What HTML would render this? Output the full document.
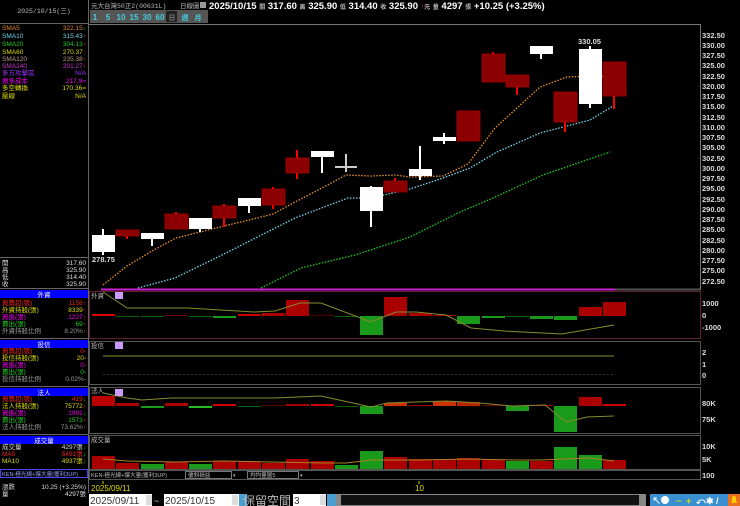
<!DOCTYPE html>
<html><head><meta charset="utf-8"><style>
html,body{margin:0;padding:0;background:#000;width:740px;height:506px;overflow:hidden}
svg{display:block}
text{font-family:"Liberation Sans","Noto Sans CJK TC",sans-serif}
.s{font-size:7px}
.m{font-family:"Liberation Mono","Noto Sans CJK TC",monospace;font-size:6.5px}
.ax{font-family:"Liberation Sans",sans-serif;font-size:7.5px;fill:#ddd;font-weight:bold}
</style></head><body>
<svg width="740" height="506" viewBox="0 0 740 506" xmlns="http://www.w3.org/2000/svg">
<rect width="740" height="506" fill="#000"/>
<!-- left panel -->
<line x1="88.5" y1="0" x2="88.5" y2="493" stroke="#666"/>
<text x="44" y="13" class="m" fill="#bbb" text-anchor="middle">2025/10/15(三)</text>
<line x1="0" y1="23.5" x2="88" y2="23.5" stroke="#666"/>
<g class="m">
<text x="2" y="30" fill="#e08030">SMA5</text><text x="86" y="30" fill="#e08030" text-anchor="end">322.15<tspan fill="#0c0">↓</tspan></text>
<text x="2" y="38" fill="#6cd0e0">SMA10</text><text x="86" y="38" fill="#6cd0e0" text-anchor="end">315.43<tspan fill="#f33">↑</tspan></text>
<text x="2" y="46" fill="#2c2">SMA20</text><text x="86" y="46" fill="#2c2" text-anchor="end">304.13<tspan fill="#f33">↑</tspan></text>
<text x="2" y="54" fill="#dd0">SMA60</text><text x="86" y="54" fill="#dd0" text-anchor="end">270.37<tspan fill="#f33">↑</tspan></text>
<text x="2" y="61" fill="#b98">SMA120</text><text x="86" y="61" fill="#b98" text-anchor="end">235.38<tspan fill="#f33">↑</tspan></text>
<text x="2" y="68" fill="#c3c">SMA240</text><text x="86" y="68" fill="#c3c" text-anchor="end">201.27<tspan fill="#f33">↑</tspan></text>
<text x="2" y="75" fill="#93f">多方攻擊區</text><text x="86" y="75" fill="#93f" text-anchor="end">N/A</text>
<text x="2" y="83" fill="#e0e">做多成本</text><text x="86" y="83" fill="#e0e" text-anchor="end">217.9=</text>
<text x="2" y="90" fill="#dd0">多空轉換</text><text x="86" y="90" fill="#dd0" text-anchor="end">170.36=</text>
<text x="2" y="98" fill="#dd0">壓線</text><text x="86" y="98" fill="#dd0" text-anchor="end">N/A</text>
</g>
<line x1="0" y1="257.5" x2="88" y2="257.5" stroke="#666"/>
<g class="m" fill="#ddd">
<text x="2" y="265">開</text><text x="86" y="265" text-anchor="end">317.60</text>
<text x="2" y="272">高</text><text x="86" y="272" text-anchor="end">325.90</text>
<text x="2" y="279">低</text><text x="86" y="279" text-anchor="end">314.40</text>
<text x="2" y="286">收</text><text x="86" y="286" text-anchor="end">325.90</text>
</g>
<line x1="0" y1="288.5" x2="88" y2="288.5" stroke="#666"/>
<rect x="0" y="290" width="88" height="8" fill="#0000ff"/>
<text x="44" y="297" class="m" fill="#fff" text-anchor="middle">外資</text>
<g class="m">
<text x="2" y="305" fill="#e22">買賣超(張)</text><text x="86" y="305" fill="#e22" text-anchor="end">1158<tspan fill="#f33">↑</tspan></text>
<text x="2" y="312" fill="#dd0">外資持股(張)</text><text x="86" y="312" fill="#dd0" text-anchor="end">8339<tspan fill="#f33">↑</tspan></text>
<text x="2" y="319" fill="#e0e">買進(張)</text><text x="86" y="319" fill="#e0e" text-anchor="end">1227<tspan fill="#f33">↑</tspan></text>
<text x="2" y="326" fill="#2c2">賣出(張)</text><text x="86" y="326" fill="#2c2" text-anchor="end">69<tspan fill="#f33">↑</tspan></text>
<text x="2" y="333" fill="#999">外資持股比例</text><text x="86" y="333" fill="#999" text-anchor="end">8.20%<tspan fill="#f33">↑</tspan></text>
</g>
<line x1="0" y1="338.5" x2="88" y2="338.5" stroke="#666"/>
<rect x="0" y="340" width="88" height="8" fill="#0000ff"/>
<text x="44" y="347" class="m" fill="#fff" text-anchor="middle">投信</text>
<g class="m">
<text x="2" y="353" fill="#e22">買賣超(張)</text><text x="86" y="353" fill="#e22" text-anchor="end">0-</text>
<text x="2" y="360" fill="#dd0">投信持股(張)</text><text x="86" y="360" fill="#dd0" text-anchor="end">20-</text>
<text x="2" y="367" fill="#e0e">買進(張)</text><text x="86" y="367" fill="#e0e" text-anchor="end">0-</text>
<text x="2" y="374" fill="#2c2">賣出(張)</text><text x="86" y="374" fill="#2c2" text-anchor="end">0-</text>
<text x="2" y="381" fill="#999">投信持股比例</text><text x="86" y="381" fill="#999" text-anchor="end">0.02%-</text>
</g>
<line x1="0" y1="386.5" x2="88" y2="386.5" stroke="#666"/>
<rect x="0" y="388" width="88" height="8" fill="#0000ff"/>
<text x="44" y="395" class="m" fill="#fff" text-anchor="middle">法人</text>
<g class="m">
<text x="2" y="401" fill="#e22">買賣超(張)</text><text x="86" y="401" fill="#e22" text-anchor="end">419<tspan fill="#0c0">↓</tspan></text>
<text x="2" y="408" fill="#dd0">法人持股(張)</text><text x="86" y="408" fill="#dd0" text-anchor="end">75772<tspan fill="#f33">↑</tspan></text>
<text x="2" y="415" fill="#e0e">買進(張)</text><text x="86" y="415" fill="#e0e" text-anchor="end">1991<tspan fill="#0c0">↓</tspan></text>
<text x="2" y="422" fill="#2c2">賣出(張)</text><text x="86" y="422" fill="#2c2" text-anchor="end">1573<tspan fill="#f33">↑</tspan></text>
<text x="2" y="429" fill="#999">法人持股比例</text><text x="86" y="429" fill="#999" text-anchor="end">73.62%<tspan fill="#f33">↑</tspan></text>
</g>
<line x1="0" y1="434.5" x2="88" y2="434.5" stroke="#666"/>
<rect x="0" y="436" width="88" height="8" fill="#0000ff"/>
<text x="44" y="443" class="m" fill="#fff" text-anchor="middle">成交量</text>
<g class="m">
<text x="2" y="449" fill="#ddd">成交量</text><text x="86" y="449" fill="#ddd" text-anchor="end">4297張<tspan fill="#0c0">↓</tspan></text>
<text x="2" y="456" fill="#e22">MA5</text><text x="86" y="456" fill="#e22" text-anchor="end">5491張<tspan fill="#0c0">↓</tspan></text>
<text x="2" y="463" fill="#dd0">MA10</text><text x="86" y="463" fill="#dd0" text-anchor="end">4937張<tspan fill="#0c0">↓</tspan></text>
</g>
<rect x="0.5" y="469.5" width="87" height="8" fill="#000" stroke="#44f"/>
<text x="2" y="476" font-size="5.6" fill="#99f" font-family="Liberation Mono,Noto Sans CJK TC,monospace">KEN-極光線+爆大量(獲利3UP)</text>
<g class="m" fill="#ddd">
<text x="2" y="489">漲跌</text><text x="86" y="489" text-anchor="end">10.25 (+3.25%)</text>
<text x="2" y="496">量</text><text x="86" y="496" text-anchor="end">4297張</text>
</g>

<!-- top header -->
<text x="91" y="8" class="m" fill="#bbb">元大台灣50正2(00631L)</text>
<text x="180" y="8" class="m" fill="#bbb">日線圖</text>
<rect x="200" y="2" width="6" height="6" fill="#999"/>
<text x="209" y="9" font-size="9.5" font-weight="bold" fill="#fff">2025/10/15 <tspan font-size="6" fill="#bbb">開</tspan> 317.60 <tspan font-size="6" fill="#bbb">高</tspan> 325.90 <tspan font-size="6" fill="#bbb">低</tspan> 314.40 <tspan font-size="6" fill="#bbb">收</tspan> 325.90 <tspan fill="#f22" font-size="7">↑</tspan><tspan font-size="6" fill="#bbb">元</tspan> <tspan font-size="6" fill="#bbb">量</tspan> 4297 <tspan font-size="6" fill="#bbb">張</tspan>  +10.25 (+3.25%)</text>
<g font-size="8" fill="#4cd" font-weight="bold">
<rect x="90" y="10" width="118" height="13" fill="#555"/>
<rect x="166" y="11" width="11" height="11" fill="#222"/>
<text x="95" y="20" text-anchor="middle">1</text>
<text x="108" y="20" text-anchor="middle">5</text>
<text x="121" y="20" text-anchor="middle">10</text>
<text x="134" y="20" text-anchor="middle">15</text>
<text x="147" y="20" text-anchor="middle">30</text>
<text x="160" y="20" text-anchor="middle">60</text>
<text x="172" y="20" text-anchor="middle" class="s" fill="#777">日</text>
<text x="185" y="20" text-anchor="middle" class="s">週</text>
<text x="198" y="20" text-anchor="middle" class="s">月</text>
</g>

<!-- main chart frame -->
<path d="M89 24.5 H700.5 V290" stroke="#777" fill="none"/>
<g class="ax">
<text x="702" y="38">332.50</text><text x="702" y="48">330.00</text><text x="702" y="58">327.50</text><text x="702" y="68">325.00</text><text x="702" y="79">322.50</text><text x="702" y="89">320.00</text><text x="702" y="99">317.50</text><text x="702" y="109">315.00</text><text x="702" y="120">312.50</text><text x="702" y="130">310.00</text><text x="702" y="140">307.50</text><text x="702" y="150">305.00</text><text x="702" y="161">302.50</text><text x="702" y="171">300.00</text><text x="702" y="181">297.50</text><text x="702" y="191">295.00</text><text x="702" y="202">292.50</text><text x="702" y="212">290.00</text><text x="702" y="222">287.50</text><text x="702" y="232">285.00</text><text x="702" y="243">282.50</text><text x="702" y="253">280.00</text><text x="702" y="263">277.50</text><text x="702" y="273">275.00</text><text x="702" y="284">272.50</text>
</g>
<!-- MAs -->
<polyline fill="none" stroke="#e8902a" stroke-width="1.3" stroke-dasharray="1.5,1.5" points="103,285 127,266 152,251 176,238 200,232 224,226 249,220 273,214 297,201 322,188 346,175 371,176 395,175 410,177 443,176 468,164 495,128 540,87 567,77 590,76 613,77"/>
<polyline fill="none" stroke="#7cd4ec" stroke-width="1.3" stroke-dasharray="1.5,1.5" points="138,288 175,278 228,252 295,218 348,198 371,198 410,189 443,178 470,168 497,152 540,133 590,120 613,106"/>
<polyline fill="none" stroke="#2c2" stroke-width="1.3" stroke-dasharray="1.5,1.5" points="261,288 301,268 355,255 410,237 460,212 493,198 543,175 610,152"/>
<!-- candles -->
<g stroke-width="2">
<g stroke="#fff"><line x1="103" y1="229" x2="103" y2="255"/><line x1="152" y1="233" x2="152" y2="246"/><line x1="200" y1="218" x2="200" y2="232"/><line x1="249" y1="198" x2="249" y2="213"/><line x1="322" y1="151" x2="322" y2="173"/><line x1="371" y1="186" x2="371" y2="227"/><line x1="420" y1="146" x2="420" y2="180"/><line x1="444" y1="133" x2="444" y2="144"/><line x1="541" y1="46" x2="541" y2="59"/><line x1="590" y1="46" x2="590" y2="108"/></g>
<g stroke="#f00"><line x1="127" y1="230" x2="127" y2="239"/><line x1="176" y1="212" x2="176" y2="229"/><line x1="224" y1="204" x2="224" y2="227"/><line x1="273" y1="187" x2="273" y2="209"/><line x1="297" y1="150" x2="297" y2="179"/><line x1="395" y1="178" x2="395" y2="192"/><line x1="493" y1="52" x2="493" y2="82"/><line x1="517" y1="75" x2="517" y2="95"/><line x1="565" y1="92" x2="565" y2="132"/><line x1="614" y1="62" x2="614" y2="109"/></g>
<g stroke="#ccc"><line x1="346" y1="154" x2="346" y2="172"/><line x1="335" y1="167" x2="357" y2="167"/></g>
</g>
<g fill="#fff">
<rect x="92" y="235" width="23" height="17"/><rect x="141" y="233" width="23" height="6"/><rect x="189" y="218" width="23" height="11"/><rect x="238" y="198" width="23" height="8"/><rect x="311" y="151" width="23" height="6"/><rect x="360" y="187" width="23" height="24"/><rect x="409" y="169" width="23" height="7"/><rect x="433" y="137" width="23" height="4"/><rect x="530" y="46" width="23" height="8"/><rect x="579" y="49" width="23" height="55"/>
</g>
<g fill="#8b0000" stroke="#a00" stroke-width="0.8">
<rect x="116" y="230" width="23" height="6"/><rect x="165" y="214" width="23" height="15"/><rect x="213" y="206" width="23" height="12"/><rect x="262" y="189" width="23" height="16"/><rect x="286" y="158" width="23" height="15"/><rect x="384" y="181" width="23" height="11"/><rect x="457" y="111" width="23" height="30"/><rect x="482" y="54" width="23" height="28"/><rect x="506" y="75" width="23" height="12"/><rect x="554" y="92" width="23" height="30"/><rect x="603" y="62" width="23" height="34"/>
</g>
<text x="92" y="262" font-size="7.5" font-weight="bold" fill="#ddd">278.75</text>
<text x="578" y="44" font-size="7.5" font-weight="bold" fill="#ddd">330.05</text>
<line x1="101" y1="289.5" x2="615" y2="289.5" stroke="#d020d0" stroke-width="2"/>
<line x1="615" y1="289.5" x2="700" y2="289.5" stroke="#555" stroke-width="2"/>

<!-- panel 1 外資 -->
<rect x="89.5" y="291.5" width="611" height="47" fill="none" stroke="#602030"/>
<text x="91" y="298" class="m" fill="#bbb">外資</text><rect x="115" y="292" width="8" height="7" fill="#c9f"/>
<g class="ax"><text x="702" y="306">1000</text><text x="702" y="318">0</text><text x="702" y="330">-1000</text></g>
<g fill="#a00">
<rect x="92" y="314" width="23" height="2" fill="#d00"/><rect x="165" y="315" width="23" height="1" fill="#600"/><rect x="238" y="314" width="23" height="2" fill="#c00"/><rect x="262" y="313" width="23" height="3"/><rect x="286" y="300" width="23" height="16"/><rect x="311" y="315" width="23" height="1" fill="#500"/><rect x="384" y="297" width="23" height="19"/><rect x="409" y="313" width="23" height="3"/><rect x="433" y="315" width="23" height="1"/><rect x="579" y="307" width="23" height="9"/><rect x="603" y="302" width="23" height="14"/>
</g>
<g fill="#1a9a1a">
<rect x="116" y="316" width="23" height="1" fill="#060"/><rect x="141" y="316" width="23" height="1" fill="#060"/><rect x="189" y="316" width="23" height="1" fill="#060"/><rect x="213" y="316" width="23" height="2"/><rect x="335" y="316" width="23" height="1" fill="#060"/><rect x="360" y="316" width="23" height="19"/><rect x="457" y="316" width="23" height="8"/><rect x="482" y="316" width="23" height="2"/><rect x="506" y="316" width="23" height="1" fill="#060"/><rect x="530" y="316" width="23" height="3"/><rect x="554" y="316" width="23" height="4"/>
</g>
<polyline fill="none" stroke="#8a8a30" stroke-width="1" points="103,292 127,308 188,308 254,312 275,311 300,303 321,303 371,322 396,312 416,312 446,315 471,328 504,331 562,334 614,325"/>

<!-- panel 2 投信 -->
<rect x="89.5" y="341.5" width="611" height="43" fill="none" stroke="#555"/>
<text x="91" y="348" class="m" fill="#bbb">投信</text><rect x="115" y="342" width="8" height="7" fill="#c9f"/>
<line x1="103" y1="356" x2="614" y2="356" stroke="#8a8a30"/>
<line x1="103" y1="374.5" x2="614" y2="374.5" stroke="#333" stroke-dasharray="2,2"/>
<g class="ax"><text x="702" y="355">2</text><text x="702" y="367">1</text><text x="702" y="378">0</text></g>

<!-- panel 3 法人 -->
<rect x="89.5" y="387.5" width="611" height="46" fill="none" stroke="#555"/>
<g fill="#a00">
<rect x="92" y="396" width="23" height="10" fill="#b00"/><rect x="116" y="403" width="23" height="3"/><rect x="165" y="403" width="23" height="3"/><rect x="213" y="404" width="23" height="2" fill="#c00"/><rect x="262" y="405" width="23" height="1" fill="#600"/><rect x="286" y="404" width="23" height="2"/><rect x="311" y="404" width="23" height="2" fill="#c00"/><rect x="384" y="403" width="23" height="3" fill="#c30"/><rect x="409" y="405" width="23" height="1"/><rect x="433" y="401" width="23" height="5" fill="#c30"/><rect x="457" y="402" width="23" height="4" fill="#b20"/><rect x="482" y="405" width="23" height="1" fill="#600"/><rect x="530" y="405" width="23" height="1"/><rect x="579" y="397" width="23" height="9"/><rect x="603" y="404" width="23" height="2" fill="#c00"/>
</g>
<g fill="#1a9a1a">
<rect x="141" y="406" width="23" height="2"/><rect x="189" y="406" width="23" height="2" fill="#2b2"/><rect x="238" y="406" width="23" height="1" fill="#060"/><rect x="335" y="406" width="23" height="1" fill="#060"/><rect x="360" y="406" width="23" height="8"/><rect x="506" y="406" width="23" height="5"/><rect x="554" y="406" width="23" height="26"/>
</g>
<polyline fill="none" stroke="#8a8a30" points="103,393 127,398 142,400 171,398 213,398 275,398 321,396 371,407 387,403 446,401 479,403 512,406 545,405 566,422 587,417 614,416"/>
<text x="91" y="393" class="m" fill="#bbb">法人</text><rect x="115" y="389" width="8" height="7" fill="#c9f"/>
<g class="ax"><text x="702" y="406">80K</text><text x="702" y="422">75K</text></g>

<!-- panel 4 成交量 -->
<rect x="89.5" y="435.5" width="611" height="34" fill="none" stroke="#555"/>
<text x="91" y="442" class="m" fill="#bbb">成交量</text>
<g fill="#a00">
<rect x="92" y="456" width="23" height="13"/><rect x="116" y="463" width="23" height="6"/><rect x="165" y="462" width="23" height="7"/><rect x="213" y="461" width="23" height="8"/><rect x="238" y="462" width="23" height="7"/><rect x="262" y="463" width="23" height="6"/><rect x="286" y="459" width="23" height="10"/><rect x="311" y="461" width="23" height="8"/><rect x="384" y="457" width="23" height="12"/><rect x="409" y="459" width="23" height="10"/><rect x="433" y="459" width="23" height="10"/><rect x="457" y="458" width="23" height="11"/><rect x="482" y="460" width="23" height="9"/><rect x="530" y="461" width="23" height="8"/><rect x="603" y="460" width="23" height="9"/>
</g>
<g fill="#1a9a1a">
<rect x="141" y="464" width="23" height="5"/><rect x="189" y="464" width="23" height="5"/><rect x="335" y="465" width="23" height="4"/><rect x="360" y="451" width="23" height="18"/><rect x="506" y="461" width="23" height="8"/><rect x="554" y="447" width="23" height="22"/><rect x="579" y="455" width="23" height="14"/>
</g>
<polyline fill="none" stroke="#b08020" points="103,459 127,461 176,462 224,461 273,462 322,463 346,463 371,460 420,460 468,459 517,460 541,460 565,459 590,458 614,461"/>
<g class="ax"><text x="702" y="449">10K</text><text x="702" y="462">5K</text><text x="702" y="478">100</text></g>

<!-- indicator row -->
<rect x="89.5" y="470.5" width="611" height="9" fill="none" stroke="#555"/>
<text x="91" y="477" font-size="5.6" fill="#bbb" font-family="Liberation Mono,Noto Sans CJK TC,monospace">KEN-極光線+爆大量(獲利3UP)</text>
<rect x="185.5" y="471.5" width="46" height="7" fill="none" stroke="#777"/><text x="188" y="477" font-size="5.6" fill="#bbb" font-family="Noto Sans CJK TC,sans-serif">優斜損益</text><text x="233" y="477" font-size="5" fill="#bbb">▾</text>
<rect x="247.5" y="471.5" width="51" height="7" fill="none" stroke="#777"/><text x="250" y="477" font-size="5.6" fill="#bbb" font-family="Noto Sans CJK TC,sans-serif">均均量圖5</text><text x="300" y="477" font-size="5" fill="#bbb">▾</text>
<!-- date axis -->
<line x1="103" y1="481" x2="103" y2="484" stroke="#dd0"/>
<line x1="419" y1="481" x2="419" y2="484" stroke="#dd0"/>
<text x="91" y="491" font-size="8" fill="#dd0">2025/09/11</text>
<text x="415" y="491" font-size="8" fill="#dd0">10</text>

<!-- bottom bar -->
<rect x="89" y="494" width="63" height="12" fill="#fff"/>
<text x="90" y="504" font-size="10" fill="#333">2025/09/11</text>
<rect x="146" y="495" width="6" height="10" fill="#ddd"/>
<text x="154" y="504" font-size="9" fill="#ccc">~</text>
<rect x="164" y="494" width="75" height="12" fill="#fff"/>
<text x="165" y="504" font-size="10" fill="#333">2025/10/15</text>
<rect x="232" y="495" width="6" height="10" fill="#ddd"/>
<rect x="239" y="494" width="8" height="12" fill="#4a9fd0"/>
<text x="243" y="505" font-size="12" fill="#bbb" font-family="Noto Serif CJK SC,serif">保留空間</text>
<rect x="293" y="494" width="33" height="12" fill="#fff"/>
<text x="294" y="504" font-size="10" fill="#333">3</text>
<rect x="320" y="495" width="6" height="10" fill="#ddd"/>
<rect x="327" y="494" width="9" height="12" fill="#4a9fd0"/>
<rect x="336" y="494" width="310" height="12" fill="#888"/>
<rect x="341" y="495" width="298" height="10" fill="#111"/>
<rect x="650" y="494" width="90" height="12" fill="#3a8fd0"/>
<g font-size="9" font-weight="bold">
<text x="652" y="504" fill="#fff">↖</text>
<circle cx="665" cy="500" r="4" fill="#fff"/><text x="676" y="504" fill="#dd0">−</text><text x="686" y="504" fill="#dd0">+</text><text x="696" y="504" fill="#fff">⤺</text><text x="706" y="504" fill="#fff">✱</text><text x="716" y="504" fill="#fff">/</text>
</g>
<rect x="728" y="494" width="12" height="12" fill="#e87020"/>
<path d="M731 503 h6 l-1 -2 v-3 a2 2 0 0 0 -4 0 v3z" fill="#fc0"/>
</svg>
</body></html>
